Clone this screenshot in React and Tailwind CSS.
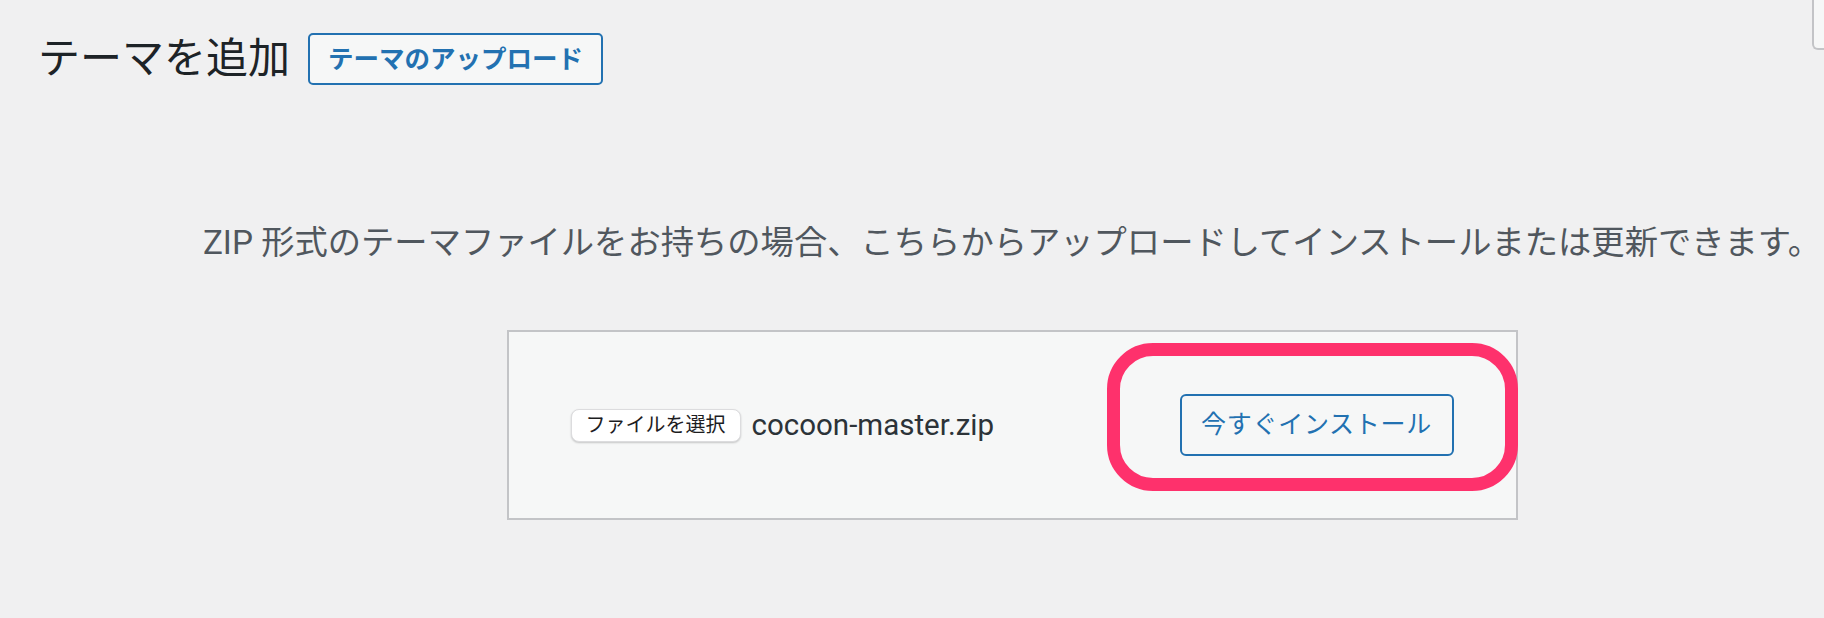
import React from "react";

const FONT = { fontFamily: 'Roboto, "Noto Sans CJK JP", sans-serif' };

const HelpTabEdge = () => (
  // right-hand help tab, mostly cut off by the window edge
  <div className="absolute top-0 right-[-100px] w-[112px] h-[50px] bg-[#f6f7f7] border-l-2 border-b-2 border-[#c3c4c7] rounded-bl-[6px]" />
);

const UploadForm = () => (
  <div className="relative flex items-center justify-between w-[1011px] p-[62px] bg-[#f6f7f7] border-2 border-[#c3c4c7]">
    <div className="flex items-center gap-[11px]">
      <button className="h-[33px] px-[14px] rounded-[8px] bg-white border border-[#dcdcde] shadow-[0_1px_2px_rgba(0,0,0,0.2)] text-[20px] text-[#1d1d1f] leading-none">
        ファイルを選択
      </button>
      <span className="text-[29.5px] text-[#2c3338]">cocoon-master.zip</span>
    </div>
    <button className="flex items-center justify-center w-[274px] h-[62px] rounded-[6px] border-2 border-[#2271b1] bg-[#f6f7f7] text-[25px] text-[#2271b1] tracking-[0.7px]">
      今すぐインストール
    </button>
    {/* annotation ring around the install button */}
    <div className="absolute left-[598px] top-[11px] w-[411px] h-[148px] rounded-[46px] border-[13px] border-[#fe316c] pointer-events-none" />
  </div>
);

export default function App() {
  return (
    <div className="relative h-[618px] w-full overflow-hidden bg-[#f0f0f1]" style={FONT}>
      <HelpTabEdge />
      <div className="w-[2024px]">
        {/* Title row */}
        <div className="flex items-center gap-[18px] pl-[38px] mt-[33px] h-[52px]">
          <h1 className="text-[42px] font-normal text-[#1d2327] leading-none">テーマを追加</h1>
          <button className="flex items-center justify-center h-[52px] px-[18px] rounded-[5px] border-2 border-[#2271b1] bg-[#f6f7f7] text-[25.5px] font-bold text-[#2271b1]">
            テーマのアップロード
          </button>
        </div>

        {/* Help text */}
        <p className="mt-[133px] text-center text-[33.3px] leading-[49px] text-[#50575e]">
          ZIP 形式のテーマファイルをお持ちの場合、こちらからアップロードしてインストールまたは更新できます。
        </p>

        <div className="flex justify-center mt-[63px]">
          <UploadForm />
        </div>
      </div>
    </div>
  );
}
